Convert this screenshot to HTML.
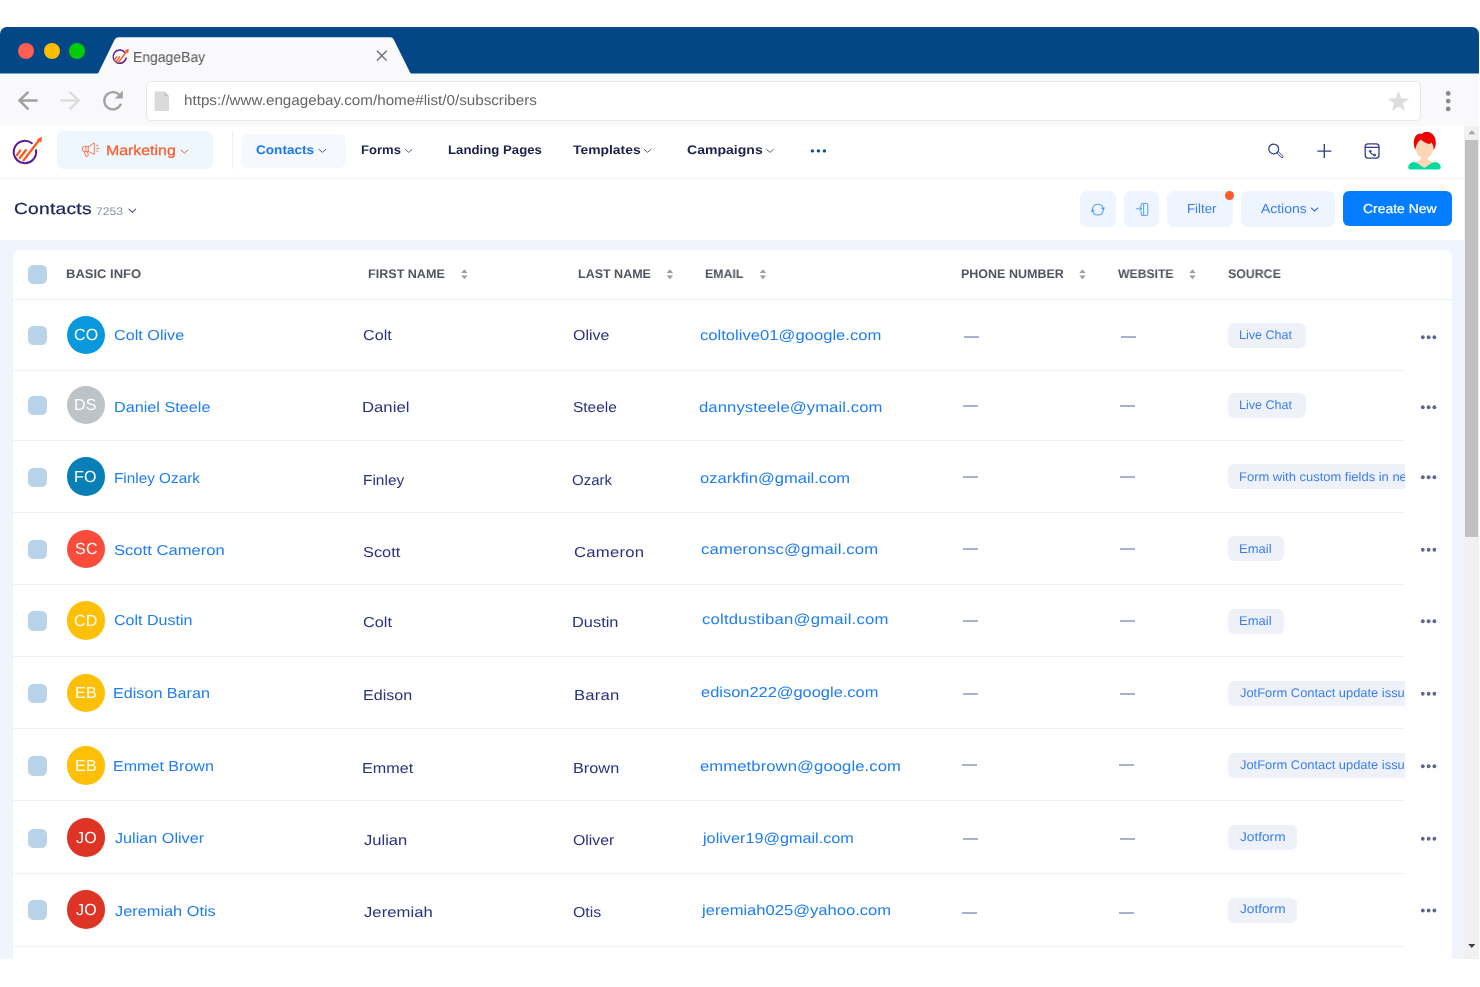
<!DOCTYPE html>
<html lang="en">
<head>
<meta charset="utf-8">
<title>EngageBay</title>
<style>
html,body{margin:0;padding:0;background:#fff;}
body{width:1480px;height:987px;position:relative;overflow:hidden;font-family:"Liberation Sans",sans-serif;}
.a{position:absolute;}
.t{position:absolute;white-space:nowrap;line-height:1;transform-origin:0 0;will-change:transform;text-rendering:geometricPrecision;font-family:"Liberation Sans",sans-serif;}
#title{left:0;top:27px;width:1479px;height:46px;background:#034787;border-radius:7px 7px 0 0;}
.tl{width:16px;height:16px;border-radius:50%;top:42.8px;}
#toolbar{left:0;top:73px;width:1479px;height:53px;background:#f9f9fb;border-top:1px solid #7ea0c1;box-sizing:border-box;}
#addr{left:145.6px;top:81.2px;width:1273.2px;height:37.8px;background:#fff;border:1px solid #e8e8ea;border-radius:5px;}
#nav{left:0;top:126px;width:1464px;height:51.5px;background:#fff;border-bottom:1px solid #f2f3f7;}
#sub{left:0;top:178.5px;width:1464px;height:61.5px;background:#fff;}
#bg{left:0;top:240px;width:1464px;height:719px;background:#f0f4fd;}
#card{left:12.5px;top:249.6px;width:1439.5px;height:709.4px;background:#fff;border-radius:7px 7px 0 0;}
#hl{left:12.5px;top:299px;width:1439.5px;height:1px;background:#eff1f8;}
.rl{position:absolute;left:12.5px;width:1392px;height:1px;background:#eff1f8;}
.cb{position:absolute;left:28px;width:19.3px;height:19.2px;border-radius:5.5px;background:#b9d4e9;}
.av{position:absolute;left:66.7px;width:38.6px;height:38.6px;border-radius:50%;}
.dash{position:absolute;width:15px;height:2px;background:#abb0ce;}
.badge{position:absolute;left:1227.5px;background:#eef1f8;}
.clip{position:absolute;left:1227.5px;width:177px;overflow:hidden;}
.dots{position:absolute;left:1420.8px;width:16px;height:3.8px;}
.dots i{position:absolute;top:0;width:3.8px;height:3.8px;border-radius:50%;background:#5f6687;}
.dots i:nth-child(1){left:0}.dots i:nth-child(2){left:5.85px}.dots i:nth-child(3){left:11.7px}
.pill{position:absolute;border-radius:7px;}
#track{left:1464px;top:126px;width:15px;height:833px;background:#f1f1f1;}
#thumb{left:1465.3px;top:139.9px;width:12.8px;height:397.5px;background:#c1c1c1;}
</style>
</head>
<body>
<!-- ===== browser chrome ===== -->
<div id="title" class="a"></div>
<div id="toolbar" class="a"></div>
<div class="a tl" style="left:18.1px;background:#ff5f52"></div>
<div class="a tl" style="left:43.7px;background:#fdbd02"></div>
<div class="a tl" style="left:69px;background:#04cb04"></div>
<svg class="a" style="left:90px;top:30px" width="330" height="46" viewBox="90 30 330 46">
  <path d="M97.2 74.2 L98.4 72.8 L114.3 40.2 Q115.6 37.3 118.8 37.3 L390.3 37.3 Q392.7 37.3 393.7 39.5 L410.2 72.8 L411.6 74.2 Z" fill="#f9f9fb"/>
  <!-- favicon -->
  <g fill="none" stroke-linecap="round">
    <path d="M124.6 52.2 A6.6 6.6 0 1 0 126.2 58" stroke="#5c1d9b" stroke-width="1.5"/>
    <path d="M118.2 62.6 L127.6 50.4" stroke="#fa5a1c" stroke-width="1.5"/>
    <path d="M114.6 59.6 L116.6 56.8 M116.4 61.4 L119.6 56.8" stroke="#fa5a1c" stroke-width="1.4"/>
    <path d="M125.4 50.6 L128.4 49.2 L128 52.6 Z" fill="#fa5a1c" stroke="#fa5a1c" stroke-width=".6"/>
  </g>
  <!-- close x -->
  <path d="M376.9 50.8 L386.7 60.6 M386.7 50.8 L376.9 60.6" stroke="#666" stroke-width="1.3" fill="none"/>
</svg>
<div id="addr" class="a"></div>
<svg class="a" style="left:10px;top:85px" width="170" height="32" viewBox="10 85 170 32">
  <!-- back -->
  <path d="M37.6 100.5 L19.4 100.5 M28.4 91.8 L19.4 100.5 L28.4 109.4" fill="none" stroke="#a0a0a0" stroke-width="2.5"/>
  <!-- forward -->
  <path d="M60.4 100.5 L78.6 100.5 M69.6 91.8 L78.6 100.5 L69.6 109.4" fill="none" stroke="#dcdcdc" stroke-width="2.5"/>
  <!-- reload -->
  <path d="M120.2 96.2 A8.6 8.6 0 1 0 121 103.6" fill="none" stroke="#a2a2a2" stroke-width="2.3"/>
  <path d="M122.8 90.6 L122.8 98.6 L114.8 98.6 Z" fill="#a2a2a2"/>
  <!-- page -->
  <path d="M154.6 91.6 L164.4 91.6 L169 96.2 L169 111 L154.6 111 Z" fill="#dadada"/>
  <path d="M164.4 91.6 L169 96.2 L164.4 96.2 Z" fill="#c4c4c4"/>
</svg>
<svg class="a" style="left:1385px;top:88px" width="72" height="28" viewBox="1385 88 72 28">
  <path d="M1398.5 90.5 L1401.2 98.2 L1409.4 98.4 L1402.9 103.3 L1405.2 111.2 L1398.5 106.5 L1391.8 111.2 L1394.1 103.3 L1387.6 98.4 L1395.8 98.2 Z" fill="#dedede"/>
  <circle cx="1448.2" cy="93.4" r="2.4" fill="#8a8a8a"/><circle cx="1448.2" cy="101.1" r="2.4" fill="#8a8a8a"/><circle cx="1448.2" cy="108.9" r="2.4" fill="#8a8a8a"/>
</svg>

<!-- ===== app ===== -->
<div id="nav" class="a"></div>
<div id="sub" class="a"></div>
<div id="bg" class="a"></div>
<div id="card" class="a"></div>
<div id="hl" class="a"></div>
<div id="track" class="a"></div>
<div id="thumb" class="a"></div>
<svg class="a" style="left:1464px;top:126px" width="15" height="833" viewBox="1464 126 15 833">
  <path d="M1468.3 134.2 L1475.3 134.2 L1471.8 130.2 Z" fill="#a3a3a3"/>
  <path d="M1468.2 944 L1475.4 944 L1471.8 948 Z" fill="#404040"/>
</svg>

<!-- nav pills -->
<div class="pill" style="left:57px;top:131px;width:155.9px;height:38.2px;background:#eef6fe"></div>
<div class="a" style="left:232.2px;top:131px;width:1px;height:38px;background:#eef0f4"></div>
<div class="pill" style="left:241.1px;top:133.8px;width:105.1px;height:34px;background:#f5f8fd"></div>

<!-- nav icons -->
<svg class="a" style="left:8px;top:132px" width="1440" height="40" viewBox="8 132 1440 40" fill="none" stroke-linecap="round" stroke-linejoin="round">
  <!-- logo -->
  <path d="M31.9 143.2 A11.2 11.2 0 1 0 36 150.2" stroke="#5c1d9b" stroke-width="2.05"/>
  <path d="M23.6 160.4 L39.4 139.8" stroke="#fa5a1c" stroke-width="2.35"/>
  <path d="M17 155.2 L20.2 150.6" stroke="#fa5a1c" stroke-width="2.3"/>
  <path d="M19.8 158 L25.8 150.2" stroke="#fa5a1c" stroke-width="2.3"/>
  <path d="M37.8 139.4 L41.6 137.4 L41 141.8 Z" fill="#fa5a1c" stroke="#fa5a1c" stroke-width=".8"/>
  <!-- megaphone -->
  <g stroke="#f9754e" stroke-width="0.95">
    <path d="M88.6 146.4 L94.3 142.9 L94.3 154.4 L88.6 151.6 Z"/>
    <path d="M88.6 146.4 L84.2 146.4 Q82.3 146.4 82.3 149 Q82.3 151.6 84.2 151.6 L88.6 151.6"/>
    <path d="M86 146.6 L86 151.4"/>
    <path d="M84.4 151.8 L85.6 156 L87.6 156.4 L88.4 154.8 L87.4 151.8"/>
    <path d="M96.6 145.8 L98 145.2 M96.8 148.4 L99 148.4 M96.6 150.8 L98 151.4"/>
  </g>
  <!-- chevrons -->
  <g stroke-width="1">
    <path d="M181.2 150.2 L184.5 153.2 L187.8 150.2" stroke="#fa5b2a"/>
    <path d="M319 149.4 L322.4 152.4 L325.8 149.4" stroke="#4a5a9a"/>
    <path d="M405.3 149.4 L408.7 152.4 L412.1 149.4" stroke="#5d6083"/>
    <path d="M644.1 149.4 L647.5 152.4 L650.9 149.4" stroke="#5d6083"/>
    <path d="M766.6 149.4 L770 152.4 L773.4 149.4" stroke="#5d6083"/>
  </g>
  <!-- more dots -->
  <g fill="#0b4f92" stroke="none"><circle cx="812.4" cy="150.9" r="1.7"/><circle cx="818.4" cy="150.9" r="1.7"/><circle cx="824.4" cy="150.9" r="1.7"/></g>
  <!-- search -->
  <g stroke="#2f3e8b">
    <circle cx="1273.7" cy="148.9" r="4.9" stroke-width="1.25"/>
    <path d="M1277.4 152.6 L1278.4 151.8 L1283 156.4 Q1283.4 158 1281.6 157.8 L1277 153.2 Z" stroke-width="1"/>
  </g>
  <!-- plus -->
  <path d="M1317.3 151.05 L1331.4 151.05 M1324.3 144 L1324.3 158.1" stroke="#2f3e8b" stroke-width="1.35" stroke-linecap="butt"/>
  <!-- calendar -->
  <g stroke="#2f3e8b" stroke-width="1.3">
    <rect x="1365.2" y="143.9" width="13.8" height="14.2" rx="2.8"/>
    <path d="M1365.4 147.4 L1378.8 147.4"/>
    <path d="M1370.1 151.3 Q1370.3 154 1374.6 155.3" stroke-width="1.1"/><circle cx="1370.1" cy="151.2" r="0.9" stroke-width="0.9"/><circle cx="1374.6" cy="155.1" r="0.9" stroke-width="0.9"/>
  </g>
  <!-- avatar -->
  <g stroke="none">
    <path d="M1408.2 167.4 Q1408.4 162.6 1414 161.9 L1434.8 161.9 Q1440.6 162.6 1440.8 167.4 Q1440.8 169.5 1438.6 169.5 L1410.4 169.5 Q1408.2 169.5 1408.2 167.4 Z" fill="#06dca0"/>
    <path d="M1415 161.6 L1423.6 167.4 Q1424.4 167.9 1425.2 167.4 L1433.6 161.6 Z" fill="#fed6b5"/>
    <path d="M1421 154 L1427.6 154 L1427.6 159.6 Q1430 161.4 1433.6 161.7 L1433.2 163 L1415.4 163 L1415 161.7 Q1418.8 161.4 1421 159.6 Z" fill="#fed6b5"/>
    <ellipse cx="1424.4" cy="148.6" rx="8.7" ry="9.6" fill="#fed6b5"/>
    <path d="M1415.2 150 Q1411.8 140 1416 135.4 Q1419.4 132.6 1422 134 Q1424.4 130.6 1429.6 132.2 Q1436.2 135 1435.8 143.6 Q1435.6 147.6 1433.6 150.4 Q1433.8 145.6 1431.6 142.6 L1429.6 144 Q1424.6 143.4 1421.2 139.6 Q1416.6 142 1415.2 150 Z" fill="#ee0202"/>
  </g>
</svg>

<!-- sub header buttons -->
<div class="pill" style="left:1080.1px;top:191px;width:36.3px;height:35.6px;background:#eef5fe"></div>
<div class="pill" style="left:1124.1px;top:191px;width:35.4px;height:35.6px;background:#eef5fe"></div>
<div class="pill" style="left:1167px;top:191px;width:65.7px;height:35.6px;background:#eef5fe"></div>
<div class="pill" style="left:1240.5px;top:191px;width:94.4px;height:35.6px;background:#eef5fe"></div>
<div class="pill" style="left:1343px;top:191px;width:109.2px;height:35.1px;background:#047efe;border-radius:6px"></div>
<div class="a" style="left:1225.1px;top:190.6px;width:9px;height:9px;border-radius:50%;background:#fd5a2e"></div>
<svg class="a" style="left:120px;top:195px" width="1220" height="30" viewBox="120 195 1220 30" fill="none" stroke-linecap="round" stroke-linejoin="round">
  <path d="M129 209.2 L132.3 212.3 L135.6 209.2" stroke="#4d5580" stroke-width="1.1"/>
  <!-- refresh -->
  <g stroke="#5aa3fb" stroke-width="1.05">
    <path d="M1092.58 208.66 A5.4 5.4 0 0 1 1103.22 208.66"/>
    <path d="M1103.22 210.54 A5.4 5.4 0 0 1 1092.58 210.54"/>
    <path d="M1101.9 208.1 L1104.5 207.7 L1103.5 210.1 Z" fill="#3d8ffb" stroke="#3d8ffb" stroke-width=".5"/>
    <path d="M1093.9 211.1 L1091.3 211.5 L1092.3 209.1 Z" fill="#3d8ffb" stroke="#3d8ffb" stroke-width=".5"/>
  </g>
  <!-- import -->
  <g stroke="#5aa3fb" stroke-width="1.05">
    <path d="M1141.2 206.2 L1141.2 204.6 Q1141.2 203.4 1142.6 203.4 L1146.4 203.4 Q1147.8 203.4 1147.8 204.6 L1147.8 214 Q1147.8 215.4 1146.4 215.4 L1142.6 215.4 Q1141.2 215.4 1141.2 214 L1141.2 211.2"/>
    <path d="M1143.6 204 L1143.6 215"/>
    <path d="M1136.2 208.7 L1141.6 208.7 M1139.8 206.9 L1141.6 208.7 L1139.8 210.5"/>
  </g>
  <path d="M1311.2 208 L1314.5 211 L1317.8 208" stroke="#3d73e5" stroke-width="1.1"/>
</svg>

<!-- header checkbox + sort icons -->
<div class="cb" style="top:265px"></div>
<svg class="a" style="left:455px;top:266px" width="750" height="16" viewBox="455 266 750 16">
  <g fill="#9c9ea6">
    <path id="so" d="M461.2 273 L467.6 273 L464.4 269.2 Z M461.2 275.4 L467.6 275.4 L464.4 279.2 Z"/>
    <path d="M666.7 273 L673.1 273 L669.9 269.2 Z M666.7 275.4 L673.1 275.4 L669.9 279.2 Z"/>
    <path d="M759.7 273 L766.1 273 L762.9 269.2 Z M759.7 275.4 L766.1 275.4 L762.9 279.2 Z"/>
    <path d="M1079.3 273 L1085.7 273 L1082.5 269.2 Z M1079.3 275.4 L1085.7 275.4 L1082.5 279.2 Z"/>
    <path d="M1189.3 273 L1195.7 273 L1192.5 269.2 Z M1189.3 275.4 L1195.7 275.4 L1192.5 279.2 Z"/>
  </g>
</svg>

<div class="cb" style="top:325.90px"></div>
<div class="av" style="top:315.70px;background:#0a98dc"></div>
<div class="dash" style="left:963.75px;top:336px"></div>
<div class="dash" style="left:1121.25px;top:336px"></div>
<div class="badge" style="top:323.00px;height:25.00px;width:78.00px;border-radius:6px"></div>
<div class="cb" style="top:396.10px"></div>
<div class="av" style="top:385.90px;background:#bdc3c7"></div>
<div class="dash" style="left:962.50px;top:405px"></div>
<div class="dash" style="left:1119.50px;top:405px"></div>
<div class="badge" style="top:393.00px;height:25.00px;width:78.00px;border-radius:6px"></div>
<div class="cb" style="top:467.50px"></div>
<div class="av" style="top:457.30px;background:#0880b6"></div>
<div class="dash" style="left:962.50px;top:476px"></div>
<div class="dash" style="left:1119.50px;top:476px"></div>
<div class="badge" style="top:463.75px;height:25.00px;width:177.00px;border-radius:6px 0 0 6px"></div>
<div class="cb" style="top:539.90px"></div>
<div class="av" style="top:529.70px;background:#fa4b3b"></div>
<div class="dash" style="left:962.50px;top:548px"></div>
<div class="dash" style="left:1119.50px;top:548px"></div>
<div class="badge" style="top:536.25px;height:25.00px;width:56.75px;border-radius:6px"></div>
<div class="cb" style="top:611.40px"></div>
<div class="av" style="top:601.20px;background:#fec007"></div>
<div class="dash" style="left:962.50px;top:620px"></div>
<div class="dash" style="left:1119.50px;top:620px"></div>
<div class="badge" style="top:608.75px;height:24.75px;width:56.75px;border-radius:6px"></div>
<div class="cb" style="top:683.90px"></div>
<div class="av" style="top:673.70px;background:#fec007"></div>
<div class="dash" style="left:962.50px;top:693px"></div>
<div class="dash" style="left:1119.50px;top:693px"></div>
<div class="badge" style="top:681.25px;height:24.50px;width:177.00px;border-radius:6px 0 0 6px"></div>
<div class="cb" style="top:756.40px"></div>
<div class="av" style="top:746.20px;background:#fec007"></div>
<div class="dash" style="left:961.75px;top:764px"></div>
<div class="dash" style="left:1118.75px;top:764px"></div>
<div class="badge" style="top:753.00px;height:24.75px;width:177.00px;border-radius:6px 0 0 6px"></div>
<div class="cb" style="top:828.65px"></div>
<div class="av" style="top:818.45px;background:#dd3425"></div>
<div class="dash" style="left:962.50px;top:838px"></div>
<div class="dash" style="left:1119.50px;top:838px"></div>
<div class="badge" style="top:825.25px;height:24.75px;width:69.50px;border-radius:6px"></div>
<div class="cb" style="top:900.40px"></div>
<div class="av" style="top:890.20px;background:#dd3425"></div>
<div class="dash" style="left:961.75px;top:912px"></div>
<div class="dash" style="left:1118.75px;top:912px"></div>
<div class="badge" style="top:897.50px;height:25.00px;width:69.50px;border-radius:6px"></div>
<svg class="a" style="left:1415px;top:300px" width="30" height="650" viewBox="1415 300 30 650" fill="#5f6687"><circle cx="1422.8" cy="337.25" r="1.9"/><circle cx="1428.6" cy="337.25" r="1.9"/><circle cx="1434.4" cy="337.25" r="1.9"/><circle cx="1422.8" cy="407.25" r="1.9"/><circle cx="1428.6" cy="407.25" r="1.9"/><circle cx="1434.4" cy="407.25" r="1.9"/><circle cx="1422.8" cy="477.25" r="1.9"/><circle cx="1428.6" cy="477.25" r="1.9"/><circle cx="1434.4" cy="477.25" r="1.9"/><circle cx="1422.8" cy="549.75" r="1.9"/><circle cx="1428.6" cy="549.75" r="1.9"/><circle cx="1434.4" cy="549.75" r="1.9"/><circle cx="1422.8" cy="621.25" r="1.9"/><circle cx="1428.6" cy="621.25" r="1.9"/><circle cx="1434.4" cy="621.25" r="1.9"/><circle cx="1422.8" cy="693.75" r="1.9"/><circle cx="1428.6" cy="693.75" r="1.9"/><circle cx="1434.4" cy="693.75" r="1.9"/><circle cx="1422.8" cy="766.25" r="1.9"/><circle cx="1428.6" cy="766.25" r="1.9"/><circle cx="1434.4" cy="766.25" r="1.9"/><circle cx="1422.8" cy="838.75" r="1.9"/><circle cx="1428.6" cy="838.75" r="1.9"/><circle cx="1434.4" cy="838.75" r="1.9"/><circle cx="1422.8" cy="910.50" r="1.9"/><circle cx="1428.6" cy="910.50" r="1.9"/><circle cx="1434.4" cy="910.50" r="1.9"/></svg>
<div class="rl" style="top:370px"></div>
<div class="rl" style="top:440px"></div>
<div class="rl" style="top:512px"></div>
<div class="rl" style="top:584px"></div>
<div class="rl" style="top:656px"></div>
<div class="rl" style="top:728px"></div>
<div class="rl" style="top:800px"></div>
<div class="rl" style="top:873px"></div>
<div class="rl" style="top:946px"></div>
<span class="t" style="left:132.91px;top:51px;font-size:14.5px;color:#555;transform:scaleX(0.9615);">EngageBay</span>
<span class="t" style="left:183.55px;top:94px;font-size:14.5px;color:#666;transform:scaleX(1.0482);">https://www.engagebay.com/home#list/0/subscribers</span>
<span class="t" style="left:106.26px;top:143px;font-size:14px;color:#fa5b2a;-webkit-text-stroke:0.25px #fa5b2a;transform:scaleX(1.1344);">Marketing</span>
<span class="t" style="left:256.46px;top:144px;font-size:12.5px;color:#1877f2;font-weight:bold;transform:scaleX(1.0862);">Contacts</span>
<span class="t" style="left:361.06px;top:144px;font-size:12.5px;color:#1c1f4a;font-weight:bold;transform:scaleX(1.0461);">Forms</span>
<span class="t" style="left:447.76px;top:144px;font-size:12.5px;color:#1c1f4a;font-weight:bold;transform:scaleX(1.0559);">Landing Pages</span>
<span class="t" style="left:572.59px;top:144px;font-size:12.5px;color:#1c1f4a;font-weight:bold;transform:scaleX(1.1111);">Templates</span>
<span class="t" style="left:686.64px;top:144px;font-size:12.5px;color:#1c1f4a;font-weight:bold;transform:scaleX(1.1239);">Campaigns</span>
<span class="t" style="left:13.90px;top:202px;font-size:16px;color:#1b2456;letter-spacing:0.206px;-webkit-text-stroke:0.25px #1b2456;transform:scaleX(1.2000);">Contacts</span>
<span class="t" style="left:96.19px;top:207px;font-size:11px;color:#8795a8;transform:scaleX(1.1043);">7253</span>
<span class="t" style="left:1186.56px;top:202px;font-size:13px;color:#3a7af0;transform:scaleX(1.0212);">Filter</span>
<span class="t" style="left:1261.00px;top:202px;font-size:13px;color:#3a7af0;transform:scaleX(1.0705);">Actions</span>
<span class="t" style="left:1362.55px;top:202px;font-size:13px;color:#fff;-webkit-text-stroke:0.2px #fff;transform:scaleX(1.0706);">Create New</span>
<span class="t" style="left:66.17px;top:268px;font-size:12.5px;color:#50555f;font-weight:bold;transform:scaleX(1.0409);">BASIC INFO</span>
<span class="t" style="left:367.95px;top:268px;font-size:12.5px;color:#50555f;font-weight:bold;transform:scaleX(1.0054);">FIRST NAME</span>
<span class="t" style="left:577.95px;top:268px;font-size:12.5px;color:#50555f;font-weight:bold;transform:scaleX(0.9948);">LAST NAME</span>
<span class="t" style="left:704.96px;top:268px;font-size:12.5px;color:#50555f;font-weight:bold;transform:scaleX(0.9868);">EMAIL</span>
<span class="t" style="left:960.50px;top:268px;font-size:12.5px;color:#50555f;font-weight:bold;transform:scaleX(0.9955);">PHONE NUMBER</span>
<span class="t" style="left:1118.00px;top:268px;font-size:12.5px;color:#50555f;font-weight:bold;transform:scaleX(0.9742);">WEBSITE</span>
<span class="t" style="left:1227.65px;top:268px;font-size:12.5px;color:#50555f;font-weight:bold;transform:scaleX(0.9878);">SOURCE</span>
<span class="t" style="left:114.24px;top:329px;font-size:14.5px;color:#1f7ef2;transform:scaleX(1.1164);">Colt Olive</span>
<span class="t" style="left:362.99px;top:329px;font-size:14.5px;color:#2b3280;transform:scaleX(1.1131);">Colt</span>
<span class="t" style="left:573.00px;top:329px;font-size:14.5px;color:#2b3280;transform:scaleX(1.1017);">Olive</span>
<span class="t" style="left:699.98px;top:329px;font-size:14.5px;color:#1f7ef2;transform:scaleX(1.1465);">coltolive01@google.com</span>
<span class="t" style="left:113.73px;top:401px;font-size:14.5px;color:#1f7ef2;transform:scaleX(1.1180);">Daniel Steele</span>
<span class="t" style="left:362.45px;top:401px;font-size:14.5px;color:#2b3280;letter-spacing:0.022px;transform:scaleX(1.1500);">Daniel</span>
<span class="t" style="left:573.02px;top:401px;font-size:14.5px;color:#2b3280;transform:scaleX(1.0668);">Steele</span>
<span class="t" style="left:698.73px;top:401px;font-size:14.5px;color:#1f7ef2;letter-spacing:0.064px;transform:scaleX(1.1500);">dannysteele@ymail.com</span>
<span class="t" style="left:113.80px;top:472px;font-size:14.5px;color:#1f7ef2;transform:scaleX(1.0563);">Finley Ozark</span>
<span class="t" style="left:363.29px;top:474px;font-size:14.5px;color:#2b3280;transform:scaleX(1.0654);">Finley</span>
<span class="t" style="left:572.30px;top:474px;font-size:14.5px;color:#2b3280;transform:scaleX(1.0335);">Ozark</span>
<span class="t" style="left:699.98px;top:472px;font-size:14.5px;color:#1f7ef2;transform:scaleX(1.1411);">ozarkfin@gmail.com</span>
<span class="t" style="left:114.48px;top:544px;font-size:14.5px;color:#1f7ef2;transform:scaleX(1.1447);">Scott Cameron</span>
<span class="t" style="left:363.24px;top:546px;font-size:14.5px;color:#2b3280;transform:scaleX(1.1259);">Scott</span>
<span class="t" style="left:574.22px;top:546px;font-size:14.5px;color:#2b3280;letter-spacing:0.201px;transform:scaleX(1.1500);">Cameron</span>
<span class="t" style="left:701.23px;top:543px;font-size:14.5px;color:#1f7ef2;letter-spacing:0.129px;transform:scaleX(1.1500);">cameronsc@gmail.com</span>
<span class="t" style="left:114.25px;top:614px;font-size:14.5px;color:#1f7ef2;transform:scaleX(1.1056);">Colt Dustin</span>
<span class="t" style="left:362.74px;top:616px;font-size:14.5px;color:#2b3280;transform:scaleX(1.1230);">Colt</span>
<span class="t" style="left:572.47px;top:616px;font-size:14.5px;color:#2b3280;transform:scaleX(1.1302);">Dustin</span>
<span class="t" style="left:701.98px;top:613px;font-size:14.5px;color:#1f7ef2;letter-spacing:0.186px;transform:scaleX(1.1500);">coltdustiban@gmail.com</span>
<span class="t" style="left:113.24px;top:687px;font-size:14.5px;color:#1f7ef2;transform:scaleX(1.1133);">Edison Baran</span>
<span class="t" style="left:362.99px;top:689px;font-size:14.5px;color:#2b3280;transform:scaleX(1.1088);">Edison</span>
<span class="t" style="left:573.70px;top:689px;font-size:14.5px;color:#2b3280;letter-spacing:0.161px;transform:scaleX(1.1500);">Baran</span>
<span class="t" style="left:701.49px;top:686px;font-size:14.5px;color:#1f7ef2;transform:scaleX(1.1326);">edison222@google.com</span>
<span class="t" style="left:112.99px;top:760px;font-size:14.5px;color:#1f7ef2;transform:scaleX(1.1083);">Emmet Brown</span>
<span class="t" style="left:361.74px;top:762px;font-size:14.5px;color:#2b3280;transform:scaleX(1.1151);">Emmet</span>
<span class="t" style="left:572.98px;top:762px;font-size:14.5px;color:#2b3280;transform:scaleX(1.1238);">Brown</span>
<span class="t" style="left:699.98px;top:760px;font-size:14.5px;color:#1f7ef2;letter-spacing:0.060px;transform:scaleX(1.1500);">emmetbrown@google.com</span>
<span class="t" style="left:114.75px;top:832px;font-size:14.5px;color:#1f7ef2;transform:scaleX(1.1166);">Julian Oliver</span>
<span class="t" style="left:363.99px;top:834px;font-size:14.5px;color:#2b3280;transform:scaleX(1.1399);">Julian</span>
<span class="t" style="left:573.01px;top:834px;font-size:14.5px;color:#2b3280;transform:scaleX(1.0912);">Oliver</span>
<span class="t" style="left:702.51px;top:832px;font-size:14.5px;color:#1f7ef2;transform:scaleX(1.1190);">joliver19@gmail.com</span>
<span class="t" style="left:114.74px;top:905px;font-size:14.5px;color:#1f7ef2;transform:scaleX(1.1266);">Jeremiah Otis</span>
<span class="t" style="left:364.24px;top:906px;font-size:14.5px;color:#2b3280;letter-spacing:0.014px;transform:scaleX(1.1500);">Jeremiah</span>
<span class="t" style="left:573.01px;top:906px;font-size:14.5px;color:#2b3280;transform:scaleX(1.0955);">Otis</span>
<span class="t" style="left:701.77px;top:904px;font-size:14.5px;color:#1f7ef2;transform:scaleX(1.1429);">jeremiah025@yahoo.com</span>
<span class="t" style="left:1239.49px;top:329px;font-size:12.5px;color:#3b7fee;transform:scaleX(1.0051);">Live Chat</span>
<span class="t" style="left:1239.49px;top:399px;font-size:12.5px;color:#3b7fee;transform:scaleX(1.0051);">Live Chat</span>
<div class="clip" style="top:463.75px;height:25.00px"><span class="t" style="left:11.96px;top:7.25px;font-size:12.5px;color:#3b7fee;letter-spacing:0.000px;transform:scaleX(1.0369)">Form with custom fields in new</span></div>
<span class="t" style="left:1239.46px;top:543px;font-size:12.5px;color:#3b7fee;transform:scaleX(1.0449);">Email</span>
<span class="t" style="left:1239.46px;top:615px;font-size:12.5px;color:#3b7fee;transform:scaleX(1.0449);">Email</span>
<div class="clip" style="top:681.25px;height:24.50px"><span class="t" style="left:12.85px;top:5.75px;font-size:12.5px;color:#3b7fee;letter-spacing:0.000px;transform:scaleX(1.0312)">JotForm Contact update issue</span></div>
<div class="clip" style="top:753.00px;height:24.75px"><span class="t" style="left:12.85px;top:6.00px;font-size:12.5px;color:#3b7fee;letter-spacing:0.000px;transform:scaleX(1.0312)">JotForm Contact update issue</span></div>
<span class="t" style="left:1240.34px;top:831px;font-size:12.5px;color:#3b7fee;transform:scaleX(1.0930);">Jotform</span>
<span class="t" style="left:1240.34px;top:903px;font-size:12.5px;color:#3b7fee;transform:scaleX(1.0930);">Jotform</span>
<span class="t" style="left:73.82px;top:328px;font-size:16px;color:#fff;letter-spacing:0.300px;">CO</span>
<span class="t" style="left:74.45px;top:398px;font-size:16px;color:#fff;letter-spacing:0.300px;">DS</span>
<span class="t" style="left:74.46px;top:470px;font-size:16px;color:#fff;letter-spacing:0.300px;">FO</span>
<span class="t" style="left:74.76px;top:542px;font-size:16px;color:#fff;letter-spacing:0.300px;">SC</span>
<span class="t" style="left:74.20px;top:614px;font-size:16px;color:#fff;letter-spacing:0.300px;">CD</span>
<span class="t" style="left:74.89px;top:686px;font-size:16px;color:#fff;letter-spacing:0.300px;">EB</span>
<span class="t" style="left:74.89px;top:759px;font-size:16px;color:#fff;letter-spacing:0.300px;">EB</span>
<span class="t" style="left:75.85px;top:831px;font-size:16px;color:#fff;letter-spacing:0.300px;">JO</span>
<span class="t" style="left:75.85px;top:903px;font-size:16px;color:#fff;letter-spacing:0.300px;">JO</span>
</body>
</html>
